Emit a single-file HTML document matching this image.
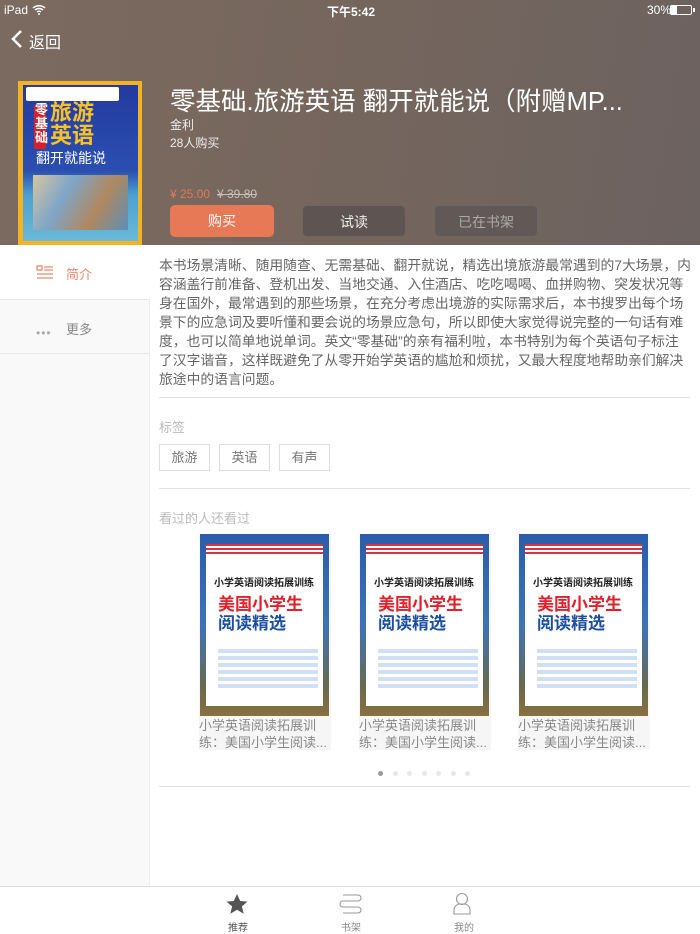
<!DOCTYPE html>
<html><head><meta charset="utf-8"><style>
*{margin:0;padding:0;box-sizing:border-box}
body{width:700px;height:934px;overflow:hidden;position:relative;background:#fff;font-family:"Liberation Sans","Noto Sans CJK SC",sans-serif}
.hdr{position:absolute;left:0;top:0;width:700px;height:245px;background:linear-gradient(100deg,#7b6a5f 0%,#75665d 50%,#6c6260 100%)}
.abs{position:absolute}
.w{color:#fff}
.btn{position:absolute;top:205px;width:104px;height:32px;border-radius:5px;font-size:14px;text-align:center;line-height:32px}
.left{position:absolute;left:0;top:245px;width:150px;height:642px;background:#f9f9f9;border-right:1px solid #eee}
.desc{position:absolute;left:159px;top:256px;width:540px;font-size:13.8px;line-height:19px;color:#666}
.hr{position:absolute;left:159px;width:531px;height:1px;background:#e2e2e2}
.tag{position:absolute;top:444px;width:51px;height:27px;border:1px solid #ddd;font-size:13px;color:#777;text-align:center;line-height:25px}
.card{position:absolute;top:534px;width:132px;height:216px;background:#f6f6f6}
.cov{position:absolute;left:1px;top:0;width:129px;height:182px;background:linear-gradient(#2a5ca8 0%,#3d73b8 50%,#6a6a4a 85%,#8a7040 100%)}
.cov .pg{position:absolute;left:6px;top:18px;width:117px;height:154px;background:#fff}
.cov .fl{position:absolute;left:6px;top:10px;width:117px;height:12px;background:repeating-linear-gradient(#d6333f 0 2px,#fff 2px 4px)}
.ct{position:absolute;left:0;top:183px;font-size:13px;line-height:17px;color:#888;width:132px}
.dot{position:absolute;top:771px;width:5px;height:5px;border-radius:50%;background:#e8e8e8}
</style></head><body>
<div class="hdr"></div>
<div class="abs w" style="left:4px;top:3px;font-size:12px">iPad</div>
<svg class="abs" style="left:32px;top:4px" width="14" height="11" viewBox="0 0 14 11"><path d="M1 4a9 9 0 0 1 12 0M3 6a6 6 0 0 1 8 0M5 8a3 3 0 0 1 4 0" stroke="#fff" stroke-width="1.5" fill="none"/><circle cx="7" cy="10" r="1" fill="#fff"/></svg>
<div class="abs w" style="left:327px;top:3px;font-size:12px;font-weight:bold">下午5:42</div>
<div class="abs w" style="left:647px;top:3px;font-size:12px">30%</div>
<div class="abs" style="left:670px;top:5px;width:22px;height:10px;border:1px solid #fff;border-radius:2px"><div style="width:6px;height:8px;background:#fff"></div></div>
<div class="abs" style="left:693px;top:8px;width:2px;height:4px;background:#fff"></div>
<svg class="abs" style="left:10px;top:29px" width="14" height="20" viewBox="0 0 14 20"><path d="M11 2L3 10l8 8" stroke="#fff" stroke-width="2.5" fill="none"/></svg>
<div class="abs w" style="left:29px;top:29px;font-size:16px">返回</div>
<!-- cover -->
<div class="abs" style="left:18px;top:81px;width:124px;height:164px;background:#f4b323"></div>
<div class="abs" style="left:23px;top:85px;width:115px;height:156px;background:linear-gradient(#243aa0 0%,#2a4fb0 55%,#4aa0d0 70%,#6cb9d8 100%)">
<div class="abs" style="left:3px;top:2px;width:93px;height:14px;background:#fff;border-radius:2px"></div>
<div class="abs" style="left:11px;top:20px;width:12px;height:44px;background:#d6202a"></div>
<div class="abs" style="left:12px;top:18px;font-size:13px;line-height:14px;color:#fff;font-weight:bold;width:10px">零基础</div>
<div class="abs" style="left:27px;top:16px;font-size:22px;line-height:23px;color:#f8c12a;font-weight:bold">旅游<br>英语</div>
<div class="abs" style="left:13px;top:63px;font-size:14px;color:#fff">翻开就能说</div>
<div class="abs" style="left:10px;top:90px;width:95px;height:55px;background:linear-gradient(120deg,#d8c5a0,#7fa6c8,#b08860,#5a8fb8)"></div>
</div>
<div class="abs w" style="left:170px;top:81px;font-size:25.5px;white-space:nowrap">零基础.旅游英语 翻开就能说（附赠MP...</div>
<div class="abs" style="left:170px;top:116px;font-size:12px;color:#eee">金利</div>
<div class="abs" style="left:170px;top:134px;font-size:12px;color:#eee">28人购买</div>
<div class="abs" style="left:170px;top:187px;font-size:12px;color:#e0795a">¥ 25.00</div>
<div class="abs" style="left:217px;top:187px;font-size:12px;color:#c8c0b8;text-decoration:line-through">¥ 39.80</div>
<div class="btn" style="left:170px;background:#e87956;color:#fff">购买</div>
<div class="btn" style="left:302px;background:#5e5553;color:#eee;border:1px solid #6e6663">试读</div>
<div class="btn" style="left:434px;background:#625957;color:#aaa;border:1px solid #6e6663">已在书架</div>
<!-- left -->
<div class="left"></div>
<div class="abs" style="left:0;top:245px;width:150px;height:55px;background:#fff;border-bottom:1px solid #e8e8e8"></div>
<svg class="abs" style="left:36px;top:265px" width="18" height="15" viewBox="0 0 18 15"><g stroke="#ec8a6a" stroke-width="1.3" fill="none"><rect x="1" y="1" width="5" height="4"/><path d="M8 2h9M8 5h9M1 9h16M1 13h16"/></g></svg>
<div class="abs" style="left:66px;top:264px;font-size:13px;color:#ec8a6a">简介</div>
<div class="abs" style="left:36px;top:326px;font-size:12px;color:#aaa;letter-spacing:1px">•••</div>
<div class="abs" style="left:66px;top:319px;font-size:13px;color:#888">更多</div>
<div class="abs" style="left:0;top:353px;width:150px;height:1px;background:#e8e8e8"></div>
<!-- desc -->
<div class="desc">本书场景清晰、随用随查、无需基础、翻开就说，精选出境旅游最常遇到的7大场景，内<br>容涵盖行前准备、登机出发、当地交通、入住酒店、吃吃喝喝、血拼购物、突发状况等<br>身在国外，最常遇到的那些场景，在充分考虑出境游的实际需求后，本书搜罗出每个场<br>景下的应急词及要听懂和要会说的场景应急句，所以即使大家觉得说完整的一句话有难<br>度，也可以简单地说单词。英文“零基础”的亲有福利啦，本书特别为每个英语句子标注<br>了汉字谐音，这样既避免了从零开始学英语的尴尬和烦扰，又最大程度地帮助亲们解决<br>旅途中的语言问题。</div>
<div class="hr" style="top:397px"></div>
<div class="abs" style="left:159px;top:417px;font-size:13px;color:#bbb">标签</div>
<div class="tag" style="left:159px">旅游</div>
<div class="tag" style="left:219px">英语</div>
<div class="tag" style="left:279px">有声</div>
<div class="hr" style="top:488px"></div>
<div class="abs" style="left:159px;top:508px;font-size:13px;color:#bbb">看过的人还看过</div>
<div class="card" style="left:199px"><div class="cov"><div class="pg"></div><div class="fl"></div><div class="abs" style="left:14px;top:40px;font-size:10px;font-weight:bold;color:#222">小学英语阅读拓展训练</div><div class="abs" style="left:18px;top:56px;font-size:17px;font-weight:bold;color:#e0202a">美国小学生</div><div class="abs" style="left:18px;top:75px;font-size:17px;font-weight:bold;color:#1e4ea0">阅读精选</div><div class="abs" style="left:18px;top:115px;width:100px;height:40px;background:repeating-linear-gradient(#cfe0f4 0 4px,#fff 4px 7px)"></div></div><div class="ct">小学英语阅读拓展训练：美国小学生阅读...</div></div>
<div class="card" style="left:359px"><div class="cov"><div class="pg"></div><div class="fl"></div><div class="abs" style="left:14px;top:40px;font-size:10px;font-weight:bold;color:#222">小学英语阅读拓展训练</div><div class="abs" style="left:18px;top:56px;font-size:17px;font-weight:bold;color:#e0202a">美国小学生</div><div class="abs" style="left:18px;top:75px;font-size:17px;font-weight:bold;color:#1e4ea0">阅读精选</div><div class="abs" style="left:18px;top:115px;width:100px;height:40px;background:repeating-linear-gradient(#cfe0f4 0 4px,#fff 4px 7px)"></div></div><div class="ct">小学英语阅读拓展训练：美国小学生阅读...</div></div>
<div class="card" style="left:518px"><div class="cov"><div class="pg"></div><div class="fl"></div><div class="abs" style="left:14px;top:40px;font-size:10px;font-weight:bold;color:#222">小学英语阅读拓展训练</div><div class="abs" style="left:18px;top:56px;font-size:17px;font-weight:bold;color:#e0202a">美国小学生</div><div class="abs" style="left:18px;top:75px;font-size:17px;font-weight:bold;color:#1e4ea0">阅读精选</div><div class="abs" style="left:18px;top:115px;width:100px;height:40px;background:repeating-linear-gradient(#cfe0f4 0 4px,#fff 4px 7px)"></div></div><div class="ct">小学英语阅读拓展训练：美国小学生阅读...</div></div>
<div class="dot" style="left:378px;background:#999"></div>
<div class="dot" style="left:393px"></div><div class="dot" style="left:407px"></div><div class="dot" style="left:422px"></div><div class="dot" style="left:436px"></div><div class="dot" style="left:451px"></div><div class="dot" style="left:465px"></div>
<div class="hr" style="top:786px"></div>
<!-- tab bar -->
<div class="abs" style="left:0;top:886px;width:700px;height:48px;background:#fff;border-top:1px solid #ddd"></div>
<svg class="abs" style="left:225px;top:893px" width="24" height="22" viewBox="0 0 24 22"><path d="M12 1l3.2 7 7.3.6-5.6 4.8 1.8 7.3L12 16.8 5.3 20.7l1.8-7.3L1.5 8.6 8.8 8z" fill="#555"/></svg>
<div class="abs" style="left:228px;top:919px;font-size:10px;color:#555">推荐</div>
<svg class="abs" style="left:338px;top:893px" width="24" height="22" viewBox="0 0 24 22"><path d="M5 2h15a2 2 0 0 1 0 6H5a3 3 0 0 0 0 6h15a3 3 0 0 1 0 6H5" stroke="#999" stroke-width="1.1" fill="none"/><path d="M4 8h16M4 14h16" stroke="#999" stroke-width="1.1"/></svg>
<div class="abs" style="left:341px;top:919px;font-size:10px;color:#888">书架</div>
<svg class="abs" style="left:452px;top:892px" width="20" height="24" viewBox="0 0 20 24"><circle cx="10" cy="7" r="5.5" stroke="#999" stroke-width="1.1" fill="none"/><path d="M2 22v-4a6 6 0 0 1 6-6h4a6 6 0 0 1 6 6v4z" stroke="#999" stroke-width="1.1" fill="none"/></svg>
<div class="abs" style="left:454px;top:919px;font-size:10px;color:#888">我的</div>
</body></html>
